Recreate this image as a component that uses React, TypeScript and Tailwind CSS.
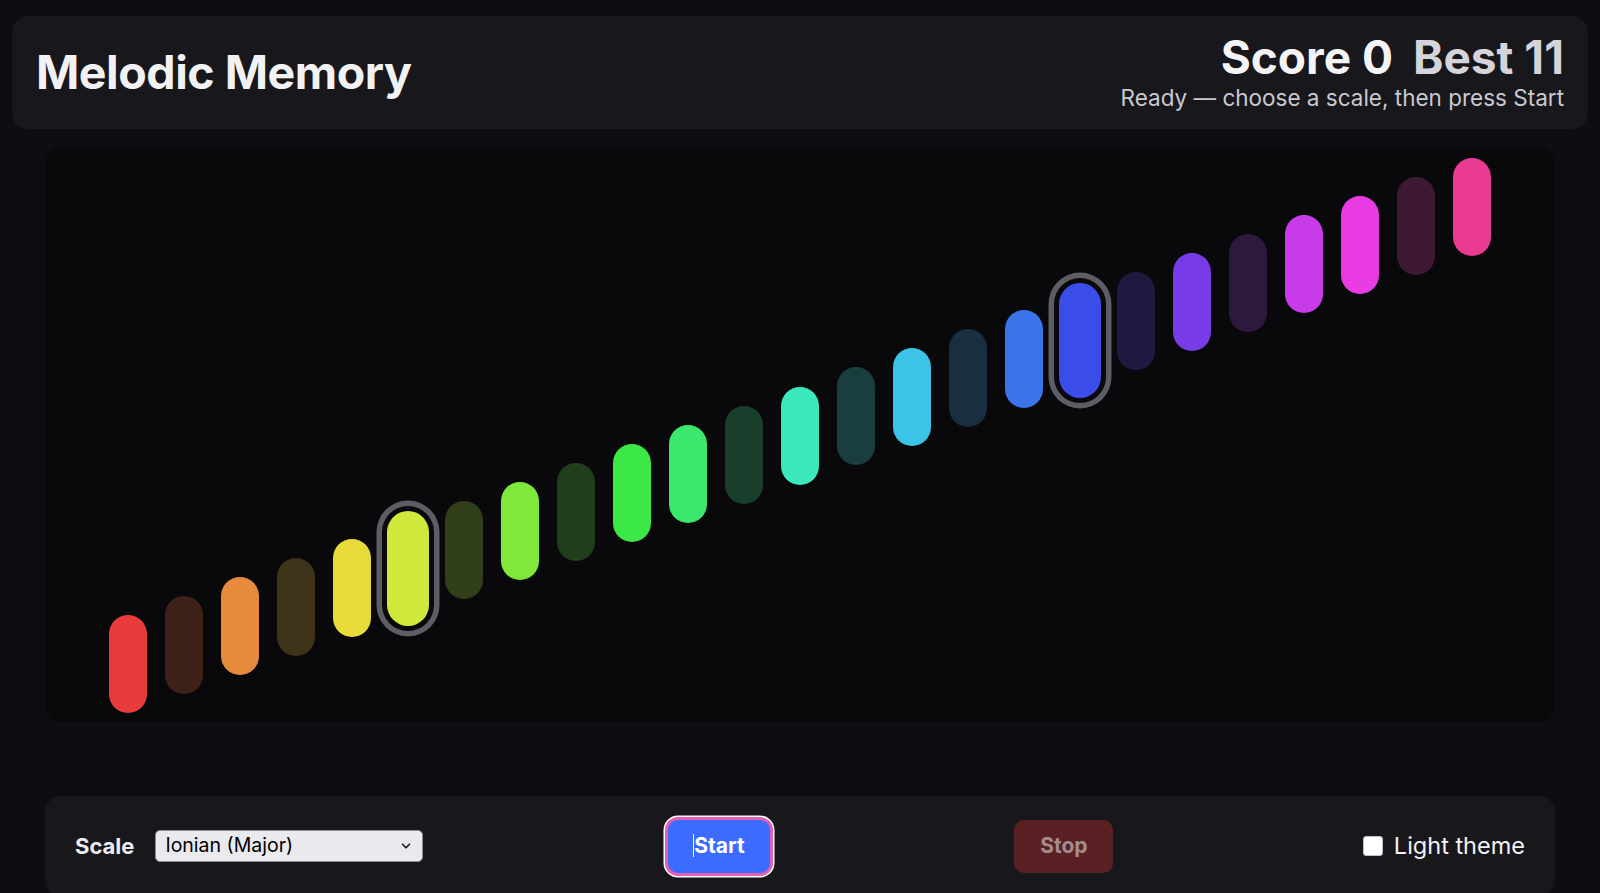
import { ChevronDown } from "lucide-react";

// which notes are lit, and which ones carry the focus ring
const LIT = [0, 2, 4, 5, 7, 9, 10, 12, 14, 16, 17, 19, 21, 22, 24];
const RINGED = [5, 17];
const NOTES = Array.from({ length: 25 }, (_, i) => i);
const STEP = 19.04;

function Pill({ i }: { i: number }) {
  const hue = i * 13.75;
  const lit = LIT.includes(i);
  const ringed = RINGED.includes(i);
  const color = lit ? `hsl(${hue} 79% 57%)` : `hsl(${hue} 42% 17%)`;

  if (ringed) {
    return (
      <div
        className="w-[42px] h-[115px] mx-[-2px] rounded-full shrink-0 shadow-[0_0_0_5px_#09090c,0_0_0_10.5px_#5d5d65]"
        style={{ background: color, marginBottom: i * STEP - 8.5 }}
      />
    );
  }

  return (
    <div
      className="w-[38px] h-[98px] rounded-full shrink-0"
      style={{ background: color, marginBottom: i * STEP }}
    />
  );
}

export default function App() {
  return (
    <main className="min-h-screen bg-[#0e0e12] pt-4 font-['Inter','Noto_Sans',sans-serif] text-[#f2f2f5]">
      {/* HEADER */}
      <header className="mx-3 h-[113px] rounded-2xl bg-[#17171c] px-6 flex items-center justify-between">
        <h1 className="text-[46.5px] font-bold leading-none tracking-[-0.01em] text-[#f2f2f5]">Melodic Memory</h1>
        <div className="flex flex-col items-end">
          <div className="text-[46px] font-bold leading-none">
            <span className="text-[#f4f4f6]">Score 0</span>
            <span className="ml-[20px] text-[#d4d4da]">Best 11</span>
          </div>
          <div className="mt-[4px] text-[22.5px] leading-[1.2] text-[#c9c9d0]">
            Ready — choose a scale, then press Start
          </div>
        </div>
      </header>

      {/* NOTE CANVAS */}
      <section className="mx-[45px] mt-[19px] h-[574px] rounded-2xl bg-[#09090c] flex items-end justify-center gap-[18px] pb-[9px]">
        {NOTES.map((i) => (
          <Pill key={i} i={i} />
        ))}
      </section>

      {/* CONTROLS */}
      <section className="mx-[45px] mt-[74px] h-[100px] rounded-2xl bg-[#17171c] px-[30px] flex items-center">
        <div className="flex items-center gap-[21px]">
          <label className="text-[22px] font-bold text-[#ececf0]">Scale</label>
          <div className="relative w-[268px] h-[32px]">
            <select className="appearance-none w-full h-full rounded-[5px] border border-[#8d8d95] bg-[#e9e9ee] pl-[9px] text-[19.5px] text-black outline-none">
              <option>Ionian (Major)</option>
              <option>Dorian</option>
              <option>Phrygian</option>
              <option>Lydian</option>
              <option>Mixolydian</option>
              <option>Aeolian (Minor)</option>
              <option>Locrian</option>
            </select>
            <ChevronDown
              size={14}
              strokeWidth={3}
              className="absolute right-[10px] top-[9px] text-[#222] pointer-events-none"
            />
          </div>
        </div>

        <button className="ml-[245px] w-[102px] h-[53px] rounded-[10px] bg-[#3b6cff] text-[21px] font-bold text-white shadow-[0_0_0_3px_#e25fb3,0_0_0_4.5px_#ffffff]">
          <span className="relative">
            Start
            <span className="absolute left-[-1px] top-[1px] w-px h-[23px] bg-white" />
          </span>
        </button>

        <button className="ml-[244px] w-[99px] h-[53px] rounded-[10px] bg-[#5a2125] text-[21px] font-bold text-[#a48c8d]">
          Stop
        </button>

        <label className="ml-auto flex items-center gap-[11px] text-[23.5px] text-[#f2f2f5]">
          <input
            type="checkbox"
            className="appearance-none w-5 h-5 rounded-[3px] bg-white border border-[#bdbdc4]"
          />
          Light theme
        </label>
      </section>
    </main>
  );
}
